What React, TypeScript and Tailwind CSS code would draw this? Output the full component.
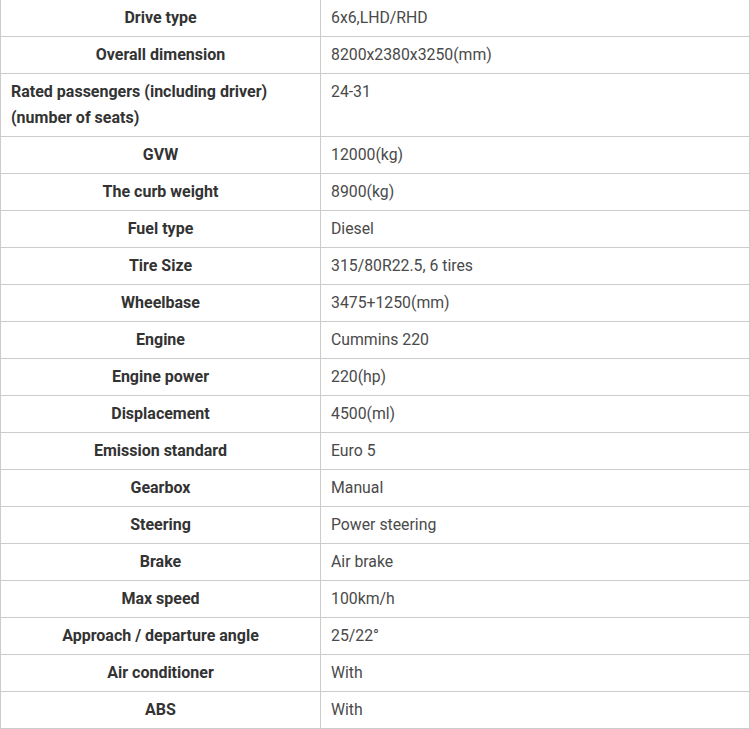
const rows: [string, string][] = [
  ["Drive type", "6x6,LHD/RHD"],
  ["Overall dimension", "8200x2380x3250(mm)"],
  ["Rated passengers (including driver) (number of seats)", "24-31"],
  ["GVW", "12000(kg)"],
  ["The curb weight", "8900(kg)"],
  ["Fuel type", "Diesel"],
  ["Tire Size", "315/80R22.5, 6 tires"],
  ["Wheelbase", "3475+1250(mm)"],
  ["Engine", "Cummins 220"],
  ["Engine power", "220(hp)"],
  ["Displacement", "4500(ml)"],
  ["Emission standard", "Euro 5"],
  ["Gearbox", "Manual"],
  ["Steering", "Power steering"],
  ["Brake", "Air brake"],
  ["Max speed", "100km/h"],
  ["Approach / departure angle", "25/22°"],
  ["Air conditioner", "With"],
  ["ABS", "With"],
];

export default function App() {
  return (
    <div className="bg-white w-[750px] text-[16px] leading-[26px] text-[#333]" style={{ fontFamily: "Roboto, sans-serif" }}>
      <div className="border-l border-r border-[#cccccc]">
        {rows.map(([label, value], i) => {
          const long = label.length > 30;
          return (
            <div key={i} className="grid grid-cols-[320px_1fr] border-b border-[#cccccc]">
              <div className={"border-r border-[#cccccc] px-[10px] py-[5px] font-bold " + (long ? "text-left" : "text-center")}>
                {long ? (
                  <>
                    Rated passengers (including driver)
                    <br />
                    (number of seats)
                  </>
                ) : (
                  label
                )}
              </div>
              <div className="px-[10px] py-[5px] text-[15.8px] text-[#4a4a4a]">{value}</div>
            </div>
          );
        })}
      </div>
    </div>
  );
}
